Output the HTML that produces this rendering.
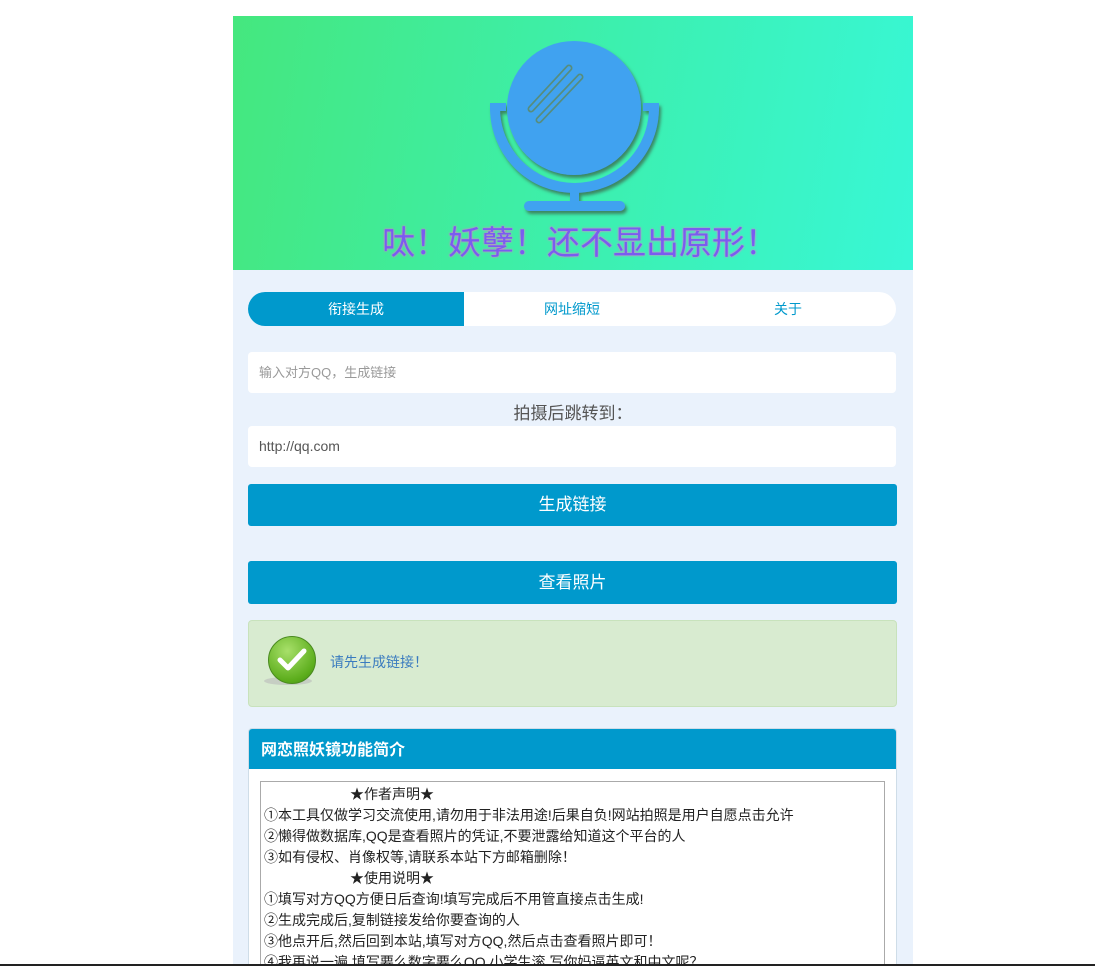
<!DOCTYPE html>
<html><head><meta charset="utf-8"><style>
*{margin:0;padding:0;box-sizing:border-box}
body{width:1095px;height:966px;background:#fff;font-family:"Liberation Sans","Noto Sans CJK SC",sans-serif;position:relative;overflow:hidden}
.wrap{position:absolute;left:233px;top:16px;width:680px;height:950px;background:#eaf2fc;overflow:hidden}
.hdr{position:absolute;left:0;top:0;width:680px;height:254px;background:linear-gradient(100deg,#45e77e 0%,#3cf0b0 55%,#38f7d6 100%)}
.abs{position:absolute}
.tabs{left:15px;top:276px;width:648px;height:34px;background:#fff;border-radius:17px;overflow:hidden;font-size:14px}
.tabs div{position:absolute;top:0;height:34px;line-height:34px;text-align:center;color:#0099cc}
.inp{left:15px;width:648px;height:41px;background:#fff;border-radius:4px;font-size:13px;padding-left:11px;line-height:41px}
.btn{left:15px;width:649px;background:#0099cc;color:#fff;border-radius:3px;text-align:center;font-size:17px}
.box{left:27px;top:765px;width:625px;height:200px;border:1px solid #aaa;background:#fff;font-size:14px;color:#222;line-height:21px;padding:2px 3px}
</style></head><body>
<div class="wrap">
<div class="hdr">
<svg width="680" height="254" viewBox="0 0 680 254">
<defs><filter id="sh" x="-20%" y="-20%" width="140%" height="140%"><feDropShadow dx="2" dy="3" stdDeviation="1.5" flood-color="#3a6a50" flood-opacity="0.8"/></filter>
<filter id="ts"><feDropShadow dx="0" dy="0" stdDeviation="1" flood-color="#ff66cc" flood-opacity="1"/></filter></defs>
<g filter="url(#sh)" fill="#40a2f0">
<ellipse cx="341" cy="92" rx="67" ry="67"/>
<path d="M262 92 A79.5 80 0 0 0 421 92" fill="none" stroke="#40a2f0" stroke-width="10"/>
<rect x="257" y="87" width="16" height="8"/><rect x="410" y="87" width="16" height="8"/>
<rect x="337" y="172" width="9" height="15"/>
<rect x="291" y="185" width="101" height="10" rx="5"/>
</g>
<g stroke="#5a8a6a" stroke-width="7" stroke-linecap="round" opacity="0.85">
<line x1="336" y1="52" x2="298" y2="93"/><line x1="347" y1="61" x2="306" y2="104"/></g>
<g stroke="#40a2f0" stroke-width="3.5" stroke-linecap="round">
<line x1="336" y1="52" x2="298" y2="93"/><line x1="347" y1="61" x2="306" y2="104"/></g>
<text x="347" y="238" text-anchor="middle" font-size="33" fill="#7a5cf0" filter="url(#ts)" font-family="Liberation Sans,Noto Sans CJK SC,sans-serif">呔！妖孽！还不显出原形！</text>
</svg>
</div>
<div class="abs tabs">
<div style="left:0;width:216px;background:#0099cc;color:#fff">衔接生成</div>
<div style="left:216px;width:216px">网址缩短</div>
<div style="left:432px;width:216px">关于</div>
</div>
<div class="abs inp" style="top:336px;color:#999">输入对方QQ，生成链接</div>
<div class="abs" style="left:0;width:680px;top:383px;text-align:center;font-size:17px;color:#555">拍摄后跳转到：</div>
<div class="abs inp" style="top:410px;color:#555;font-size:14px">http://qq.com</div>
<div class="abs btn" style="top:468px;height:42px;line-height:41px">生成链接</div>
<div class="abs btn" style="top:545px;height:43px;line-height:43px">查看照片</div>
<div class="abs" style="left:15px;top:604px;width:649px;height:87px;background:#d8ebd0;border:1px solid #c8e2bc;border-radius:4px">
<div class="abs" style="left:15px;top:56px;width:48px;height:8px;border-radius:50%;background:#bbb;opacity:.6"></div>
<div class="abs" style="left:19px;top:15px;width:48px;height:48px;border-radius:50%;background:radial-gradient(circle at 40% 30%,#a8e06a,#5cad1c 70%,#3f8a10);border:1px solid #4a8a20"></div>
<svg class="abs" style="left:26px;top:24px" width="34" height="30"><path d="M5 15 L13 23 L29 6" fill="none" stroke="#fff" stroke-width="5" stroke-linecap="round" stroke-linejoin="round"/></svg>
<div class="abs" style="left:81px;top:31px;font-size:14px;color:#3a7bbf">请先生成链接！</div>
</div>
<div class="abs" style="left:15px;top:712px;width:649px;height:260px;background:#fff;border:1px solid #cfdde8;border-radius:4px 4px 0 0">
<div style="height:40px;background:#0099cc;color:#fff;font-weight:bold;font-size:16px;line-height:44px;padding-left:12px;border-radius:3px 3px 0 0">网恋照妖镜功能简介</div>
</div>
<div class="abs box">
<div style="padding-left:86px">★作者声明★</div>
<div>①本工具仅做学习交流使用,请勿用于非法用途!后果自负!网站拍照是用户自愿点击允许</div>
<div>②懒得做数据库,QQ是查看照片的凭证,不要泄露给知道这个平台的人</div>
<div>③如有侵权、肖像权等,请联系本站下方邮箱删除！</div>
<div style="padding-left:86px">★使用说明★</div>
<div>①填写对方QQ方便日后查询!填写完成后不用管直接点击生成!</div>
<div>②生成完成后,复制链接发给你要查询的人</div>
<div>③他点开后,然后回到本站,填写对方QQ,然后点击查看照片即可！</div>
<div>④我再说一遍,填写要么数字要么QQ,小学生滚,写你妈逼英文和中文呢？</div>
</div>
</div>
<div class="abs" style="left:0;top:964px;width:1095px;height:2px;background:#222"></div>
</body></html>
